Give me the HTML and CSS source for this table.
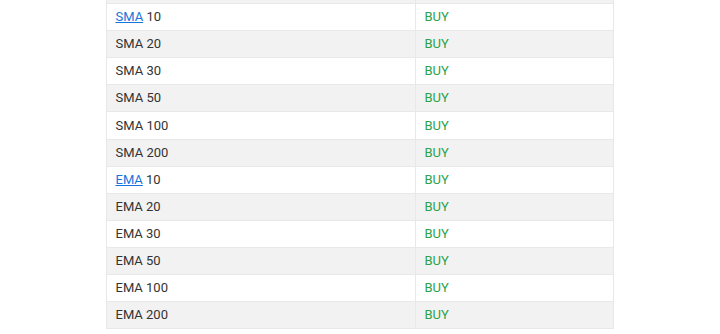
FILE: index.html
```html
<!DOCTYPE html>
<html>
<head>
<meta charset="utf-8">
<link rel="stylesheet" href="styles.css">
</head>
<body>
<div class="wrap">
<table class="ma">
<tbody>
<tr class="prev"><td class="name"></td><td class="sig"></td></tr>
<tr><td class="name"><a href="#">SMA</a> 10</td><td class="sig">BUY</td></tr>
<tr class="alt"><td class="name">SMA 20</td><td class="sig">BUY</td></tr>
<tr><td class="name">SMA 30</td><td class="sig">BUY</td></tr>
<tr class="alt"><td class="name">SMA 50</td><td class="sig">BUY</td></tr>
<tr><td class="name">SMA 100</td><td class="sig">BUY</td></tr>
<tr class="alt"><td class="name">SMA 200</td><td class="sig">BUY</td></tr>
<tr><td class="name"><a href="#">EMA</a> 10</td><td class="sig">BUY</td></tr>
<tr class="alt"><td class="name">EMA 20</td><td class="sig">BUY</td></tr>
<tr><td class="name">EMA 30</td><td class="sig">BUY</td></tr>
<tr class="alt"><td class="name">EMA 50</td><td class="sig">BUY</td></tr>
<tr><td class="name">EMA 100</td><td class="sig">BUY</td></tr>
<tr class="alt"><td class="name">EMA 200</td><td class="sig">BUY</td></tr>
</tbody>
</table>
</div>
</body>
</html>
```
FILE: styles.css
```css
html, body {
  margin: 0;
  padding: 0;
  background: #ffffff;
}
body {
  font-family: Roboto, "Liberation Sans", sans-serif;
  font-size: 13px;
  color: #333333;
}
.wrap {
  display: flex;
  justify-content: center;
}
.ma {
  width: 508px;
  border-collapse: collapse;
  margin-left: -1px;
  margin-top: -24px;
}
.ma td {
  height: 26.1px;
  padding: 0 0 0 9px;
  border: 1px solid #e8e8e8;
  vertical-align: middle;
  line-height: 16px;
}
.ma tr.alt td,
.ma tr.prev td {
  background: #f2f2f2;
}
.ma td.name {
  width: 299px;
}
.ma td.sig {
  color: #2ca24a;
}
.ma a {
  color: #1a73d9;
  text-decoration: underline;
}
```
